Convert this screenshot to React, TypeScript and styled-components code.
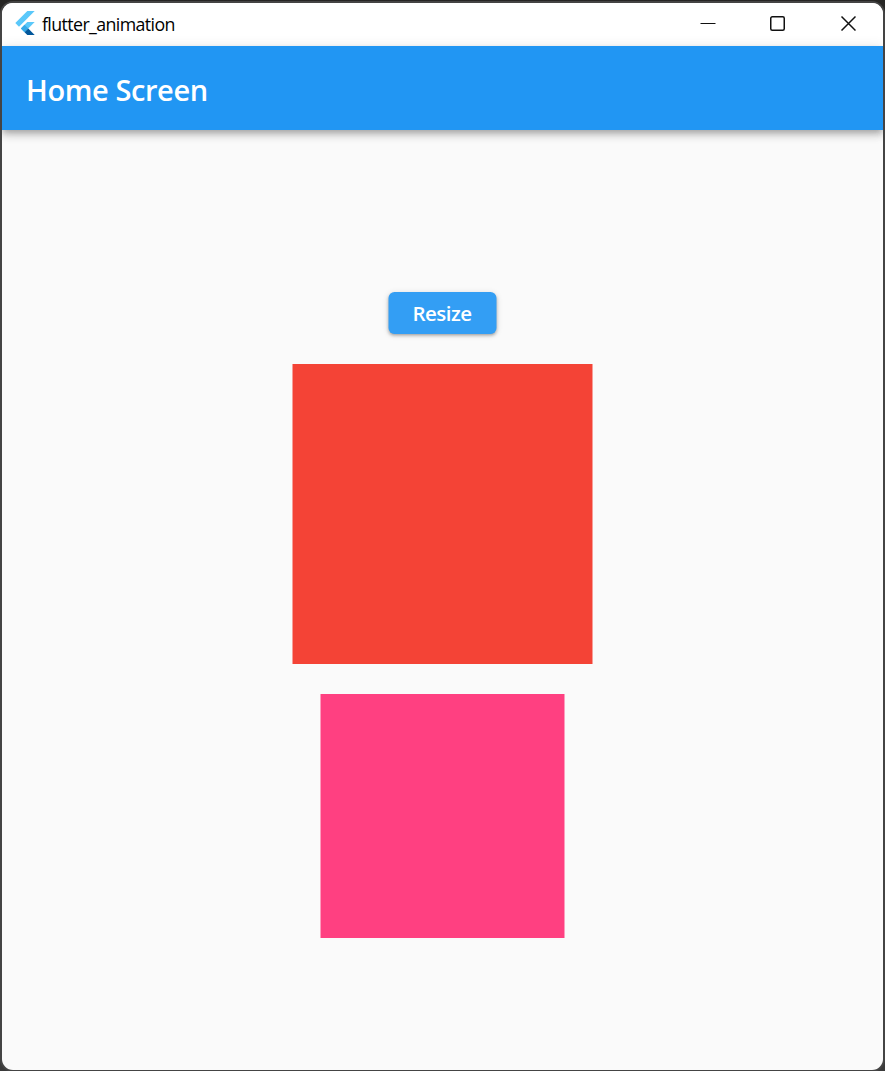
import React from "react";
import styled, { createGlobalStyle } from "styled-components";

const GlobalStyle = createGlobalStyle`
  * { box-sizing: border-box; }
  body { margin: 0; background: #2b2b2b; font-family: "Segoe UI", "Open Sans", "Noto Sans", sans-serif; }
`;

const Desktop = styled.div`
  height: 1071px;
  padding: 3px 2px 1px;
  background: linear-gradient(#262523, #333 40px, #3a3a3a);
  overflow: hidden;
`;

const Window = styled.main`
  display: flex;
  flex-direction: column;
  height: 100%;
  border-radius: 11px;
  overflow: hidden;
  background: #fafafa;
  box-shadow: 0 0 0 2px #444;
`;

const TitleBar = styled.header`
  display: flex;
  align-items: center;
  flex: 0 0 43px;
  padding-left: 11px;
  background: #fff;
`;

const Logo = styled.svg`
  width: 24px;
  height: 24px;
  margin-top: -3px;
`;

const WindowTitle = styled.span`
  margin: -2px 0 0 5px;
  font-size: 17.8px;
  line-height: 24px;
  letter-spacing: -0.61px;
  color: #000;
`;

const Controls = styled.div`
  display: flex;
  margin-left: auto;
`;

const Control = styled.button<{ $width: number }>`
  width: ${(p) => p.$width}px;
  height: 43px;
  padding: 0 0 0 1px;
  border: 0;
  background: none;
  display: flex;
  justify-content: center;
`;

const Glyph = styled.svg`
  width: 16px;
  height: 16px;
  margin-top: 12px;
  fill: none;
  stroke: #111;
  stroke-width: 1.5;
`;

const AppBar = styled.div`
  flex: 0 0 84px;
  display: flex;
  align-items: center;
  padding: 4px 24px 0;
  background: #2196f3;
  box-shadow: 0 3px 6px -1px rgba(0, 0, 0, 0.2), 0 6px 8px rgba(0, 0, 0, 0.14), 0 1px 12px rgba(0, 0, 0, 0.1);
`;

const Heading = styled.h1`
  margin: 0;
  font-size: 29px;
  line-height: 40px;
  font-weight: 600;
  letter-spacing: -0.4px;
  color: #fff;
`;

const Body = styled.section`
  flex: 1;
  display: flex;
  flex-direction: column;
  align-items: center;
  padding: 162px 1px 0 0;
  gap: 30px;
`;

const ResizeButton = styled.button`
  width: 108px;
  height: 42px;
  padding: 0 1px 0 0;
  border: 0;
  border-radius: 6px;
  background: #339ef4;
  box-shadow: 0 3px 2px -3px rgba(0, 0, 0, 0.2), 0 2px 3px rgba(0, 0, 0, 0.2), 0 1px 6px rgba(0, 0, 0, 0.12);
  font: 600 20.5px/42px "Segoe UI", "Open Sans", "Noto Sans", sans-serif;
  letter-spacing: -0.5px;
  color: #fff;
  transform: translateX(0.5px);
`;

const Square = styled.div<{ $size: number; $color: string }>`
  width: ${(p) => p.$size}px;
  height: ${(p) => p.$size}px;
  background: ${(p) => p.$color};
  transform: translateX(0.5px);
`;

export default function App() {
  return (
    <Desktop>
      <GlobalStyle />
      <Window>
        <TitleBar>
          <Logo viewBox="0 0 24 24">
            <path fill="#5ac8fa" d="M14.3 0 2.3 12 6 15.7 21.7 0z" />
            <path fill="#5ac8fa" d="M14.3 11.07 7.86 17.53l3.68 3.7L21.7 11.07z" />
            <path fill="#35a9e8" d="m7.86 17.53 3.69-3.69 3.69 3.69-3.69 3.7z" />
            <path fill="#01579b" d="m11.55 21.23 3.69-3.7L21.7 24h-7.37z" />
          </Logo>
          <WindowTitle>flutter_animation</WindowTitle>
          <Controls>
            <Control $width={69} aria-label="Minimize">
              <Glyph viewBox="0 0 16 16"><path strokeWidth="1" d="M.5 8.5h15" /></Glyph>
            </Control>
            <Control $width={70} aria-label="Maximize">
              <Glyph viewBox="0 0 16 16"><rect x=".75" y="1.75" width="13.5" height="13.5" rx="1.5" /></Glyph>
            </Control>
            <Control $width={71} aria-label="Close">
              <Glyph viewBox="0 0 16 16"><path d="m1.5 1.5 14 14M15.5 1.5l-14 14" /></Glyph>
            </Control>
          </Controls>
        </TitleBar>
        <AppBar>
          <Heading>Home Screen</Heading>
        </AppBar>
        <Body>
          <ResizeButton>Resize</ResizeButton>
          <Square $size={300} $color="#f44336" />
          <Square $size={244} $color="#ff4081" />
        </Body>
      </Window>
    </Desktop>
  );
}
